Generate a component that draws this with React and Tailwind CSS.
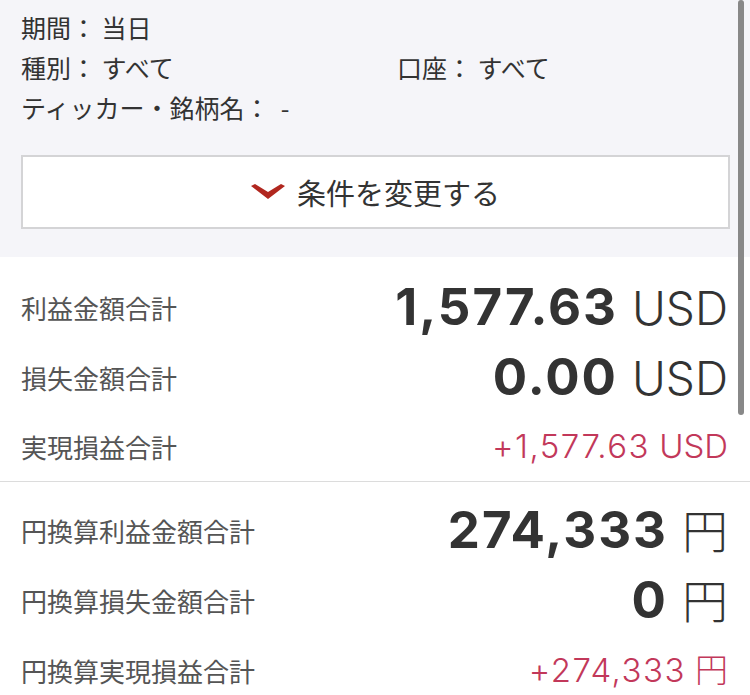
const jp = { fontFamily: '"Noto Sans CJK JP", "Noto Sans", sans-serif' };
const num = { fontFamily: 'Inter, "Liberation Sans", "Noto Sans CJK JP", sans-serif' };

function BigRow({ label, value, unit }) {
  return (
    <div className="flex items-center justify-between h-[70px]">
      <span className="text-[26px] text-[#555]" style={jp}>{label}</span>
      <span className="flex items-baseline text-[#333]">
        <span className="text-[51px] font-bold tracking-[2px]" style={num}>{value}</span>
        <span className="ml-[14px] text-[46px] font-light" style={unit === '円' ? jp : num}>{unit}</span>
      </span>
    </div>
  );
}

function TotalRow({ label, value, unit, className = 'h-[70px]' }) {
  return (
    <div className={`flex items-center justify-between ${className}`}>
      <span className="text-[26px] text-[#555]" style={jp}>{label}</span>
      <span className="flex items-baseline text-[#c2385a]">
        <span className="text-[33px] font-light tracking-[1.5px]" style={num}>{value}</span>
        <span className="ml-[9px] text-[33px] font-light" style={unit === '円' ? jp : num}>{unit}</span>
      </span>
    </div>
  );
}

export default function App() {
  return (
    <div className="relative w-[750px] h-[695px] overflow-hidden bg-white">
      {/* 検索条件 */}
      <div className="bg-[#f5f5f9] px-[21px] pt-[7px] pb-[28px] text-[25px] text-[#333] leading-[40px]" style={jp}>
        <div>期間：&nbsp;当日</div>
        <div className="flex">
          <span className="w-[376px]">種別：&nbsp;すべて</span>
          <span>口座：&nbsp;すべて</span>
        </div>
        <div>ティッカー・銘柄名：&nbsp;&nbsp;-</div>
        <button className="mt-[28px] w-[709px] h-[74px] bg-white border-2 border-[#d4d4d6] flex items-center justify-center gap-[12px]">
          <svg width="34" height="16" viewBox="0 0 34 16">
            <polygon points="0,2 4,0 17,8 30,0 34,2 17,15" fill="#b1271f" />
          </svg>
          <span className="text-[29px] text-[#333]">条件を変更する</span>
        </button>
      </div>

      {/* USD */}
      <div className="px-[21px] pr-[22px] pt-[15px] border-b border-[#dcdcdc]">
        <BigRow label="利益金額合計" value="1,577.63" unit="USD" />
        <BigRow label="損失金額合計" value="0.00" unit="USD" />
        <TotalRow label="実現損益合計" value="+1,577.63" unit="USD" className="h-[69px]" />
      </div>

      {/* 円換算 */}
      <div className="px-[21px] pr-[22px] pt-[13px]">
        <BigRow label="円換算利益金額合計" value="274,333" unit="円" />
        <BigRow label="円換算損失金額合計" value="0" unit="円" />
        <TotalRow label="円換算実現損益合計" value="+274,333" unit="円" />
      </div>

      {/* スクロールバー */}
      <div className="absolute right-[6px] top-0 w-[6px] h-[415px] rounded-full bg-[#888]" />
    </div>
  );
}
